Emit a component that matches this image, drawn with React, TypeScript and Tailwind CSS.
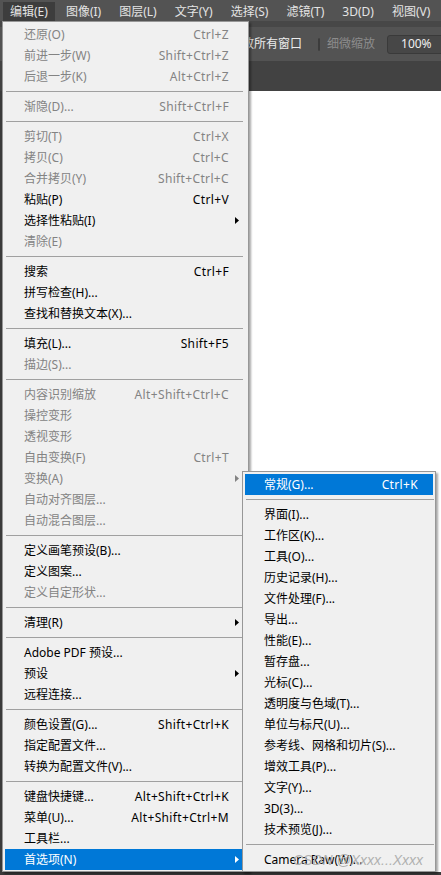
import React from "react";

type Entry =
  | { sep: true }
  | {
      label: string;
      shortcut?: string;
      disabled?: boolean;
      sub?: boolean;
      active?: boolean;
    };

const SEP: Entry = { sep: true };

const editMenu: Entry[] = [
  { label: "还原(O)", shortcut: "Ctrl+Z", disabled: true },
  { label: "前进一步(W)", shortcut: "Shift+Ctrl+Z", disabled: true },
  { label: "后退一步(K)", shortcut: "Alt+Ctrl+Z", disabled: true },
  SEP,
  { label: "渐隐(D)...", shortcut: "Shift+Ctrl+F", disabled: true },
  SEP,
  { label: "剪切(T)", shortcut: "Ctrl+X", disabled: true },
  { label: "拷贝(C)", shortcut: "Ctrl+C", disabled: true },
  { label: "合并拷贝(Y)", shortcut: "Shift+Ctrl+C", disabled: true },
  { label: "粘贴(P)", shortcut: "Ctrl+V" },
  { label: "选择性粘贴(I)", sub: true },
  { label: "清除(E)", disabled: true },
  SEP,
  { label: "搜索", shortcut: "Ctrl+F" },
  { label: "拼写检查(H)..." },
  { label: "查找和替换文本(X)..." },
  SEP,
  { label: "填充(L)...", shortcut: "Shift+F5" },
  { label: "描边(S)...", disabled: true },
  SEP,
  { label: "内容识别缩放", shortcut: "Alt+Shift+Ctrl+C", disabled: true },
  { label: "操控变形", disabled: true },
  { label: "透视变形", disabled: true },
  { label: "自由变换(F)", shortcut: "Ctrl+T", disabled: true },
  { label: "变换(A)", sub: true, disabled: true },
  { label: "自动对齐图层...", disabled: true },
  { label: "自动混合图层...", disabled: true },
  SEP,
  { label: "定义画笔预设(B)..." },
  { label: "定义图案..." },
  { label: "定义自定形状...", disabled: true },
  SEP,
  { label: "清理(R)", sub: true },
  SEP,
  { label: "Adobe PDF 预设..." },
  { label: "预设", sub: true },
  { label: "远程连接..." },
  SEP,
  { label: "颜色设置(G)...", shortcut: "Shift+Ctrl+K" },
  { label: "指定配置文件..." },
  { label: "转换为配置文件(V)..." },
  SEP,
  { label: "键盘快捷键...", shortcut: "Alt+Shift+Ctrl+K" },
  { label: "菜单(U)...", shortcut: "Alt+Shift+Ctrl+M" },
  { label: "工具栏..." },
  { label: "首选项(N)", sub: true, active: true },
];

const prefsMenu: Entry[] = [
  { label: "常规(G)...", shortcut: "Ctrl+K", active: true },
  SEP,
  { label: "界面(I)..." },
  { label: "工作区(K)..." },
  { label: "工具(O)..." },
  { label: "历史记录(H)..." },
  { label: "文件处理(F)..." },
  { label: "导出..." },
  { label: "性能(E)..." },
  { label: "暂存盘..." },
  { label: "光标(C)..." },
  { label: "透明度与色域(T)..." },
  { label: "单位与标尺(U)..." },
  { label: "参考线、网格和切片(S)..." },
  { label: "增效工具(P)..." },
  { label: "文字(Y)..." },
  { label: "3D(3)..." },
  { label: "技术预览(J)..." },
  SEP,
  { label: "Camera Raw(W)..." },
];

const topMenus = ["编辑(E)", "图像(I)", "图层(L)", "文字(Y)", "选择(S)", "滤镜(T)", "3D(D)", "视图(V)"];

const Arrow = ({ color }: { color: string }) => (
  <svg width="4" height="7" viewBox="0 0 4 7" className="absolute right-[3px] top-[7px]">
    <path d="M0 0 L4 3.5 L0 7 Z" fill={color} />
  </svg>
);

const MenuRows = ({ items, padRight }: { items: Entry[]; padRight: string }) => (
  <>
    {items.map((it, i) => {
      if ("sep" in it) {
        return (
          <div key={i} className="h-[9px] flex items-center ml-[1px] -mr-[1px]">
            <div className="h-px w-full bg-[#a0a0a0]" />
          </div>
        );
      }
      const color = it.active ? "text-white" : it.disabled ? "text-[#838383]" : "text-black";
      return (
        <div
          key={i}
          className={`relative h-[21px] flex items-center justify-between pl-[19px] ${padRight} ${color} ${
            it.active ? "bg-[#0078d7]" : ""
          }`}
        >
          <span className="whitespace-nowrap">{it.label}</span>
          {it.shortcut ? <span className="whitespace-nowrap tracking-[0.35px]">{it.shortcut}</span> : null}
          {it.sub ? <Arrow color={it.active ? "#ffffff" : it.disabled ? "#838383" : "#000000"} /> : null}
        </div>
      );
    })}
  </>
);

export default function App() {
  return (
    <div
      className="relative w-[441px] h-[875px] overflow-hidden bg-[#3a3a3a] text-[12px]"
      style={{ fontFamily: '"Noto Sans", "Noto Sans CJK SC", sans-serif' }}
    >
      {/* menu bar */}
      <div className="h-[21px] bg-[#535353] flex items-stretch pl-[3px] gap-[4px] text-[#e4e4e4] pt-[2px]">
        {topMenus.map((m, i) => (
          <div
            key={m}
            className={`px-[7px] flex items-center whitespace-nowrap ${i === 0 ? "bg-[#3d3d3d]" : ""}`}
          >
            {m}
          </div>
        ))}
      </div>
      <div className="h-[6px] bg-[#474747]" />

      {/* options bar */}
      <div className="h-[34px] bg-[#535353] flex items-center pl-[230px] whitespace-nowrap">
        <span className="text-[#ececec] w-[72px]">缩放所有窗口</span>
        <div className="ml-[16px] w-[13px] h-[13px] rounded-[2px] border border-[#3c3c3c] bg-[#4c4c4c]" />
        <span className="ml-[7px] text-[#8c8c8c]">细微缩放</span>
        <div className="ml-[12px] shrink-0 w-[60px] h-[19px] rounded-[3px] border border-[#3a3a3a] bg-[#474747] text-[#f0f0f0] flex items-center pl-[13px]">
          100%
        </div>
      </div>

      {/* doc tab strip */}
      <div className="h-[30px] bg-[#424242]" />

      {/* canvas */}
      <div className="flex h-[781px]">
        <div className="w-[2px] bg-[#3a3a3a]" />
        <div className="flex-1 bg-white" />
      </div>

      {/* Edit dropdown */}
      <div className="absolute left-[2px] top-[21px] w-[247px] border border-[#979797] bg-[#f0f0f0] pt-[2px] pb-[1px] pl-[2px] pr-[6px] shadow-[2px_2px_2px_rgba(0,0,0,0.35)]">
        <MenuRows items={editMenu} padRight="pr-[13px]" />
      </div>

      {/* Preferences submenu */}
      <div className="absolute left-[242px] top-[471px] w-[194px] border border-[#979797] bg-[#f0f0f0] pt-[2px] pb-[1px] px-[2px] shadow-[2px_2px_2px_rgba(0,0,0,0.35)]">
        <MenuRows items={prefsMenu} padRight="pr-[15px]" />
      </div>

      {/* watermark */}
      <div
        className="absolute left-[293px] top-[850px] text-[14px] italic text-[#b0b0b0] whitespace-nowrap pointer-events-none"
        style={{ fontFamily: '"Liberation Sans", sans-serif' }}
      >
        CSDN @Xxxx...Xxxx
      </div>
    </div>
  );
}
